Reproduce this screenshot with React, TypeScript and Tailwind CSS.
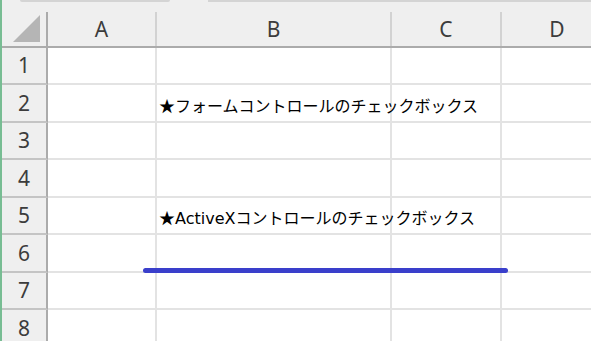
import React from 'react';

const columns = [
  { label: 'A', width: 'w-[109px]' },
  { label: 'B', width: 'w-[235px]' },
  { label: 'C', width: 'w-[110px]' },
  { label: 'D', width: 'w-[112px]' },
];

const rows = [
  { n: 1, h: 'h-[37px]', text: '' },
  { n: 2, h: 'h-[38px]', text: 'フォームコントロールのチェックボックス' },
  { n: 3, h: 'h-[37px]', text: '' },
  { n: 4, h: 'h-[38px]', text: '' },
  { n: 5, h: 'h-[37px]', text: 'ActiveXコントロールのチェックボックス' },
  { n: 6, h: 'h-[38px]', text: '' },
  { n: 7, h: 'h-[37px]', text: '' },
  { n: 8, h: 'h-[38px]', text: '' },
];

const App = () => {
  return (
    <div className="relative w-[591px] h-[341px] overflow-hidden bg-white border-l-2 border-[#78bd93] font-['Noto_Sans',sans-serif]">
      {/* Header strip */}
      <div className="bg-[#efefef]">
        <div className="flex h-[12px]">
          <div className="w-[18px]" />
          <div className="w-[150px] h-[2px] bg-[#d4d4d4] rounded-b-sm" />
          <div className="w-[38px]" />
          <div className="flex-1 h-[2px] bg-[#d4d4d4]" />
        </div>
        <div className="flex h-[36px] border-b-2 border-[#ababab]">
          <div className="w-[46px] shrink-0 flex items-end justify-center pb-[4px] border-r-2 border-[#ababab]">
            <svg width="27" height="27" viewBox="0 0 27 27" className="mr-[-4px]">
              <polygon points="27,0 27,27 0,27" fill="#b5b5b5" />
            </svg>
          </div>
          {columns.map((c) => (
            <div
              key={c.label}
              className={`${c.width} shrink-0 flex items-center justify-center border-r-2 border-[#d2d2d2] text-[21px] leading-none text-[#3c3c3c]`}
            >
              {c.label}
            </div>
          ))}
        </div>
      </div>

      {/* Rows */}
      {rows.map((r) => (
        <div key={r.n} className={`flex ${r.h}`}>
          <div className="w-[46px] shrink-0 flex items-center justify-center bg-[#efefef] border-r-2 border-b-2 border-r-[#ababab] border-b-[#c4c4c4] text-[21px] leading-none text-[#3c3c3c]">
            {r.n}
          </div>
          {columns.map((c, i) => (
            <div
              key={c.label}
              className={`${c.width} shrink-0 flex items-center border-r-2 border-b-2 border-[#e3e3e3]`}
            >
              {i === 1 && r.text && (
                <span className="pl-[2px] pt-[5px] whitespace-nowrap text-[16px] leading-none text-black font-['DejaVu_Sans','Noto_Sans_CJK_JP',sans-serif]">
                  <span className="font-['Noto_Sans_CJK_JP',sans-serif]">★</span>
                  {r.text}
                </span>
              )}
            </div>
          ))}
        </div>
      ))}

      {/* Drawn line shape */}
      <div className="absolute left-[141px] top-[268px] w-[365px] h-[5px] rounded-full bg-[#3a3fcb]" />
    </div>
  );
};

export default App;
